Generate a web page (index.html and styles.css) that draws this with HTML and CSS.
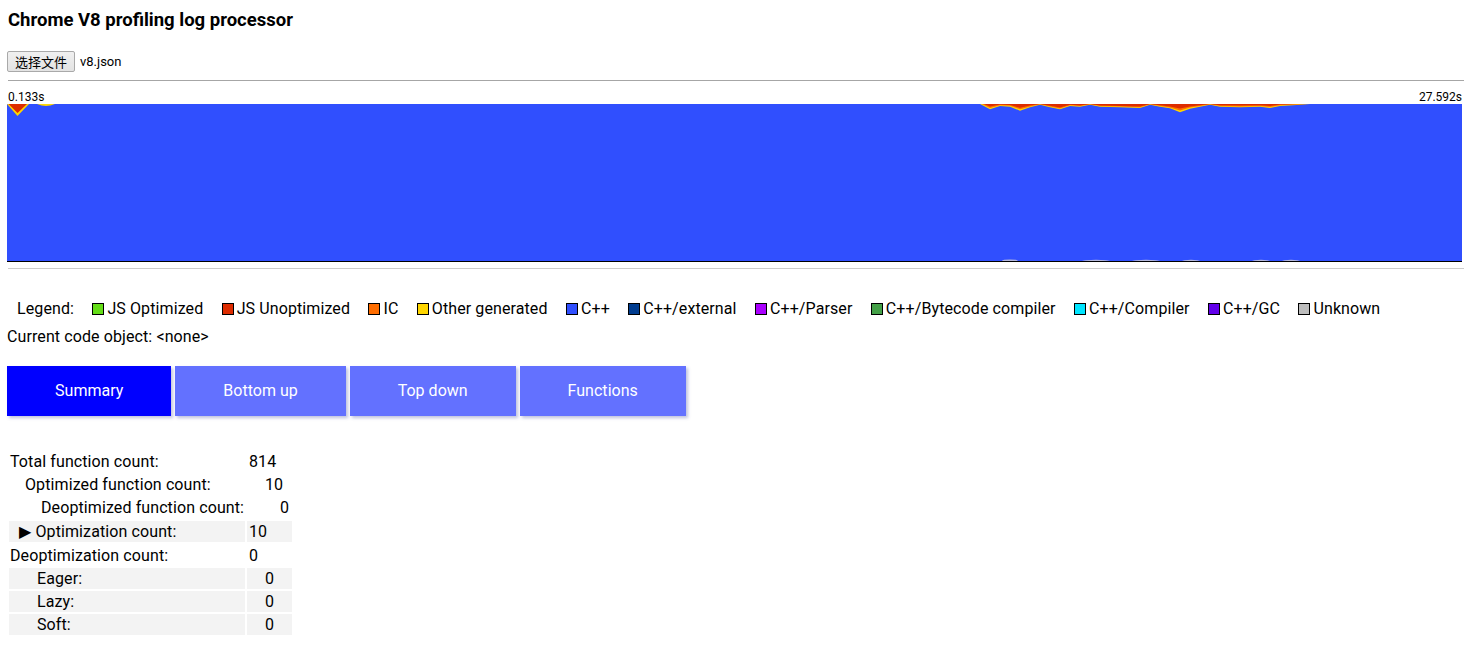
FILE: index.html
```html
<!DOCTYPE html>
<html lang="en">
<head>
<meta charset="utf-8">
<title>Chrome V8 profiling log processor</title>
<link rel="stylesheet" href="styles.css">
</head>
<body>
<h3 class="title">Chrome V8 profiling log processor</h3>
<div class="file-row"><span class="file-btn">选择文件</span><span class="file-name">v8.json</span></div>
<hr class="rule rule-dark">
<div class="timeline">
  <div class="time-labels"><span>0.133s</span><span>27.592s</span></div>
  <svg class="chart" width="1455" height="158" viewBox="0 0 1455 158" xmlns="http://www.w3.org/2000/svg">
    <rect x="0" y="0" width="1455" height="157" fill="#304ffe"/>
    <polygon points="0,0 22,0 10.5,12" fill="#ffd600"/>
    <polygon points="1.5,0 20,0 10.5,9" fill="#dd2c00"/>
    <path d="M30,0 Q39,4 48,0 Z" fill="#ffd600"/>
    <polygon fill="#ffd600" points="973,0 983,5.3 993,2 1003,2.7 1013,6.7 1023,3.3 1033,0.7 1043,3.3 1053,5.3 1063,2 1073,2.7 1083,0.7 1093,2.7 1113,3.3 1133,4 1143,0.7 1153,2.7 1163,4.3 1173,8.3 1183,4.7 1193,2.7 1203,0.7 1213,2.7 1233,3.3 1253,2.7 1263,4 1273,2 1286,1.3 1303,0"/>
    <polygon fill="#ff6d00" points="975,0 983,4 993,1.2 1003,1.8 1013,5.2 1023,2.4 1033,0.3 1043,2.6 1053,4.4 1063,1.3 1073,2 1083,0.3 1093,2 1113,2.6 1133,3.2 1143,0.3 1153,1.9 1163,3.4 1173,6.6 1183,3.6 1193,1.9 1203,0.3 1213,1.9 1233,2.4 1253,1.9 1263,3 1273,1.2 1286,0.6 1301,0"/>
    <polygon fill="#dd2c00" points="977,0 983,2.4 993,0.6 1003,1 1013,3.8 1023,1.6 1033,0 1043,1.8 1053,3.6 1063,0.8 1073,1.5 1083,0 1093,1.6 1113,2 1133,2.6 1143,0 1153,1.2 1163,2.5 1173,4.6 1183,2.6 1193,1.2 1203,0 1213,1.2 1233,1.6 1253,1.2 1263,2 1273,0.6 1286,0.2 1299,0"/>
    <ellipse cx="1003" cy="157" rx="8" ry="1.6" fill="#b4b8dc"/>
    <ellipse cx="1089" cy="157" rx="14" ry="1.2" fill="#b4b8dc"/>
    <ellipse cx="1139" cy="157" rx="14" ry="1.2" fill="#b4b8dc"/>
    <ellipse cx="1184" cy="157" rx="9" ry="1.2" fill="#b4b8dc"/>
    <ellipse cx="1254" cy="157" rx="9" ry="1.2" fill="#b4b8dc"/>
    <ellipse cx="1284" cy="157" rx="9" ry="1.2" fill="#b4b8dc"/>
    <rect x="0" y="157" width="1455" height="1" fill="#000"/>
  </svg>
</div>
<hr class="rule rule-light">
<div class="legend">
  <span class="legend-label">Legend:</span>
  <span class="legend-item"><span class="swatch sw-jsopt"></span>JS Optimized</span>
  <span class="legend-item"><span class="swatch sw-jsunopt"></span>JS Unoptimized</span>
  <span class="legend-item"><span class="swatch sw-ic"></span>IC</span>
  <span class="legend-item"><span class="swatch sw-other"></span>Other generated</span>
  <span class="legend-item"><span class="swatch sw-cpp"></span>C++</span>
  <span class="legend-item"><span class="swatch sw-cppext"></span>C++/external</span>
  <span class="legend-item"><span class="swatch sw-parser"></span>C++/Parser</span>
  <span class="legend-item"><span class="swatch sw-bytecode"></span>C++/Bytecode compiler</span>
  <span class="legend-item"><span class="swatch sw-compiler"></span>C++/Compiler</span>
  <span class="legend-item"><span class="swatch sw-gc"></span>C++/GC</span>
  <span class="legend-item"><span class="swatch sw-unknown"></span>Unknown</span>
</div>
<div class="current">Current code object: &lt;none&gt;</div>
<div class="tabs">
  <span class="tab tab-active">Summary</span>
  <span class="tab">Bottom up</span>
  <span class="tab">Top down</span>
  <span class="tab">Functions</span>
</div>
<div class="summary">
  <div class="srow"><span class="lab l0">Total function count:</span><span class="val v0">814</span></div>
  <div class="srow"><span class="lab l1">Optimized function count:</span><span class="val v1">10</span></div>
  <div class="srow"><span class="lab l2">Deoptimized function count:</span><span class="val v2">0</span></div>
  <div class="srow srow-gap gray"><span class="lab lt"><span class="tri">▶</span> Optimization count:</span><span class="val v0">10</span></div>
  <div class="srow srow-gap"><span class="lab l0">Deoptimization count:</span><span class="val v0">0</span></div>
  <div class="srow gray"><span class="lab l3">Eager:</span><span class="val v1">0</span></div>
  <div class="srow gray"><span class="lab l3">Lazy:</span><span class="val v1">0</span></div>
  <div class="srow gray"><span class="lab l3">Soft:</span><span class="val v1">0</span></div>
</div>
</body>
</html>
```
FILE: styles.css
```css
html, body {
  margin: 0;
  padding: 0;
  background: #fff;
}
body {
  padding: 8px;
  font-family: Roboto, "Noto Sans CJK SC", sans-serif;
  font-size: 16px;
  letter-spacing: 0.1px;
  color: #000;
}
.title {
  margin: 1px 0 0 0;
  font-size: 18.5px;
  line-height: 22px;
  font-weight: bold;
  letter-spacing: 0;
}
.file-row {
  margin-top: 20px;
  display: flex;
  align-items: center;
  height: 21px;
  letter-spacing: 0;
}
.file-btn {
  margin-left: -1px;
  box-sizing: border-box;
  height: 21px;
  padding: 0 7px;
  border: 1px solid #a9a9a9;
  border-radius: 2px;
  background: linear-gradient(#f0f0f0, #e3e3e3);
  font-family: "Noto Sans CJK SC", sans-serif;
  font-size: 13px;
  line-height: 19px;
}
.file-name {
  margin-left: 5px;
  font-size: 13px;
  font-family: Roboto, sans-serif;
}
.rule {
  border: 0;
  height: 0;
  margin: 0;
}
.rule-dark {
  margin-top: 8px;
  border-top: 1px solid #a6a6a6;
}
.rule-light {
  margin-top: 6px;
  border-top: 1px solid #cccccc;
}
.timeline {
  margin-top: 9px;
  margin-left: -1px;
  width: 1455px;
}
.time-labels {
  display: flex;
  justify-content: space-between;
  font-size: 12px;
  line-height: 14px;
  height: 14px;
  padding-left: 1px;
  letter-spacing: 0;
}
.chart {
  display: block;
}
.legend {
  margin-top: 29.5px;
  display: flex;
  align-items: center;
  gap: 18.4px;
  height: 20px;
  line-height: 20px;
  margin-bottom: 8px;
}
.legend-label {
  margin-left: 9px;
}
.legend-item {
  display: flex;
  align-items: center;
  white-space: nowrap;
}
.swatch {
  box-sizing: border-box;
  width: 12px;
  height: 12px;
  border: 1px solid #000;
  margin-right: 3px;
}
.sw-jsopt { background: #64dd17; }
.sw-jsunopt { background: #dd2c00; }
.sw-ic { background: #ff6d00; }
.sw-other { background: #ffd600; }
.sw-cpp { background: #304ffe; }
.sw-cppext { background: #003c8f; }
.sw-parser { background: #aa00ff; }
.sw-bytecode { background: #43a047; }
.sw-compiler { background: #00e5ff; }
.sw-gc { background: #6200ea; }
.sw-unknown { background: #bdbdbd; }
.current {
  height: 20px;
  line-height: 20px;
  margin-left: -1px;
}
.tabs {
  margin-top: 19.5px;
  margin-left: -1px;
  display: flex;
  gap: 3.8px;
  letter-spacing: 0.03px;
}
.tab {
  padding: 15px 48px;
  line-height: 20px;
  color: #fff;
  background: #6371ff;
  box-shadow: 2px 2px 3px rgba(70, 80, 160, 0.35);
}
.tab-active {
  background: #0000ff;
}
.summary {
  margin-top: 34.7px;
  margin-left: 1px;
  display: flex;
  flex-direction: column;
  gap: 2px;
}
.srow {
  display: flex;
  gap: 2px;
  height: 21px;
  line-height: 21px;
}
.srow-gap {
  margin-top: 1px;
}
.lab {
  width: 236px;
  box-sizing: border-box;
  white-space: nowrap;
}
.val {
  width: 45px;
  box-sizing: border-box;
}
.gray .lab, .gray .val {
  background: #f3f3f3;
}
.l0 { padding-left: 1px; }
.l1 { padding-left: 16px; }
.l2 { padding-left: 32px; }
.l3 { padding-left: 28px; }
.lt { padding-left: 10px; }
.v0 { padding-left: 2px; }
.v1 { padding-left: 18px; }
.v2 { padding-left: 33px; }
.tri {
  font-family: "DejaVu Sans", sans-serif;
  font-size: 16px;
}
```
